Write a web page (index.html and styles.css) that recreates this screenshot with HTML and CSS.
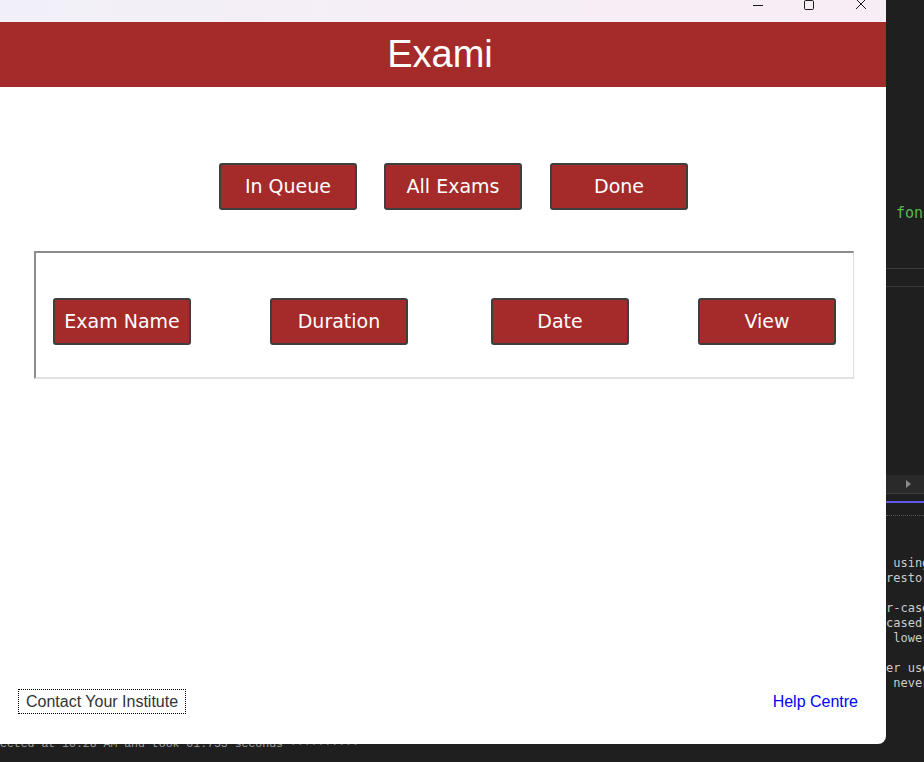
FILE: index.html
```html
<!DOCTYPE html>
<html>
<head>
<meta charset="utf-8">
<link rel="stylesheet" href="styles.css">
<title>Exami</title>
</head>
<body>
<div class="desktop">
  <div class="strip">
    <div class="strip-text">ected at 10:28 AM and took 01:755 seconds <span class="dots">··········</span></div>
  </div>
  <div class="side">
    <div class="code">fon</div>
    <div class="hline first"></div>
    <div class="hline second"></div>
    <div class="scrollbar"><span class="arrow"></span></div>
    <div class="accent"></div>
    <div class="dotted"></div>
    <div class="term">
      <div class="tl">&nbsp;using</div>
      <div class="tl">restor</div>
      <div class="tl">&nbsp;</div>
      <div class="tl">r-case</div>
      <div class="tl">cased&nbsp;</div>
      <div class="tl">&nbsp;lower</div>
      <div class="tl">&nbsp;</div>
      <div class="tl">er use</div>
      <div class="tl">&nbsp;never</div>
    </div>
  </div>
  <div class="window">
    <div class="titlebar">
      <svg class="ctl" width="51" height="22" viewBox="0 0 51 22"><path d="M20 5.5H30" stroke="#1a1a1a" stroke-width="1" fill="none"/></svg>
      <svg class="ctl" width="51" height="22" viewBox="0 0 51 22"><rect x="20.5" y="0.5" width="9" height="9" rx="1.2" stroke="#1a1a1a" stroke-width="1" fill="none"/></svg>
      <svg class="ctl" width="51" height="22" viewBox="0 0 51 22"><path d="M21 -1L31 9M31 -1L21 9" stroke="#1a1a1a" stroke-width="1" fill="none"/></svg>
    </div>
    <div class="header">Exami</div>
    <div class="tabs">
      <div class="btn">In Queue</div>
      <div class="btn">All Exams</div>
      <div class="btn done">Done</div>
    </div>
    <div class="frame">
      <div class="btn c1">Exam Name</div>
      <div class="btn c2">Duration</div>
      <div class="btn c3">Date</div>
      <div class="btn c4">View</div>
    </div>
    <div class="spacer"></div>
    <div class="footer">
      <div class="contact">Contact Your Institute</div>
      <div class="help">Help Centre</div>
    </div>
  </div>
</div>
</body>
</html>
```

FILE: styles.css
```css
html, body {
  margin: 0;
  padding: 0;
  background: #1f1f1f;
  width: 924px;
  height: 762px;
  overflow: hidden;
}

.desktop {
  display: grid;
  grid-template-columns: 886px 38px;
  grid-template-rows: 744px 18px;
  width: 924px;
  height: 762px;
}

.window {
  grid-column: 1;
  grid-row: 1;
  background: #ffffff;
  border-bottom-right-radius: 8px;
  display: flex;
  flex-direction: column;
  overflow: hidden;
}

.titlebar {
  height: 22px;
  background: linear-gradient(90deg, #f1f0f8 0%, #f6eef6 50%, #f8edf4 100%);
  display: flex;
  justify-content: flex-end;
  flex: none;
}

.ctl {
  display: block;
}

.header {
  height: 65px;
  flex: none;
  background: #a52a2a;
  color: #ffffff;
  font-family: "Liberation Sans", Arial, sans-serif;
  font-size: 38px;
  line-height: 65px;
  text-align: center;
  padding-right: 6px;
}

.btn {
  box-sizing: border-box;
  width: 138px;
  height: 47px;
  background: #a52a2a;
  border: 2px solid #3e3e3e;
  border-radius: 3px;
  color: #ffffff;
  font-family: "DejaVu Sans", Verdana, sans-serif;
  font-size: 19px;
  line-height: 43px;
  text-align: center;
  white-space: nowrap;
  flex: none;
}

.tabs {
  display: flex;
  gap: 27px;
  margin-top: 76px;
  margin-left: 219px;
  flex: none;
}

.tabs .done {
  margin-left: 1px;
}

.frame {
  box-sizing: border-box;
  margin-top: 41px;
  margin-left: 34px;
  width: 820px;
  height: 128px;
  border-top: 2px solid #8c8c8c;
  border-left: 2px solid #8c8c8c;
  border-right: 1px solid #dcdcdc;
  border-bottom: 2px solid #e2e2e2;
  display: flex;
  align-items: flex-start;
  padding-top: 45px;
  padding-left: 17px;
  flex: none;
}

.frame .c2 { margin-left: 79px; }
.frame .c3 { margin-left: 83px; }
.frame .c4 { margin-left: 69px; }

.spacer {
  flex: 1;
}

.footer {
  display: flex;
  justify-content: space-between;
  align-items: center;
  padding: 0 28px 30px 18px;
  flex: none;
  font-family: "Liberation Sans", Arial, sans-serif;
  font-size: 16px;
}

.contact {
  box-sizing: border-box;
  height: 25px;
  width: 168px;
  border: 1px dotted #000000;
  color: #333333;
  line-height: 23px;
  padding-left: 7px;
  white-space: nowrap;
}

.help {
  color: #0000ff;
  line-height: 20px;
}

.strip {
  grid-column: 1;
  grid-row: 2;
  background: #1f1f1f;
  overflow: hidden;
}

.strip-text {
  font-family: "Liberation Mono", "DejaVu Sans Mono", monospace;
  font-size: 11.5px;
  line-height: 14px;
  color: #a0a0a0;
  margin-top: -7px;
  white-space: nowrap;
}

.strip-text .dots {
  color: #777777;
}

.side {
  grid-column: 2;
  grid-row: 1 / span 2;
  background: #1f1f1f;
  overflow: hidden;
  display: flex;
  flex-direction: column;
  font-family: "DejaVu Sans Mono", "Liberation Mono", monospace;
}

.code {
  margin-top: 204px;
  margin-left: 10px;
  height: 18px;
  line-height: 18px;
  font-size: 15px;
  color: #55b955;
  white-space: nowrap;
}

.hline {
  height: 1px;
  background: #3b3b3b;
}

.hline.first { margin-top: 46px; }
.hline.second { margin-top: 17px; }

.scrollbar {
  margin-top: 188px;
  height: 18px;
  background: #2a2a2a;
  border-bottom: 1px solid #3d3d3d;
}

.arrow {
  display: block;
  width: 0;
  height: 0;
  border-left: 5px solid #8a8a8a;
  border-top: 4px solid transparent;
  border-bottom: 4px solid transparent;
  margin-left: 20px;
  margin-top: 5px;
}

.accent {
  margin-top: 7px;
  height: 2px;
  background: #6259e8;
}

.dotted {
  margin-top: 12px;
  border-top: 1px dotted #555555;
}

.term {
  margin-top: 40px;
  font-size: 12px;
  color: #cccccc;
}

.tl {
  height: 15px;
  line-height: 15px;
  white-space: nowrap;
}
```
